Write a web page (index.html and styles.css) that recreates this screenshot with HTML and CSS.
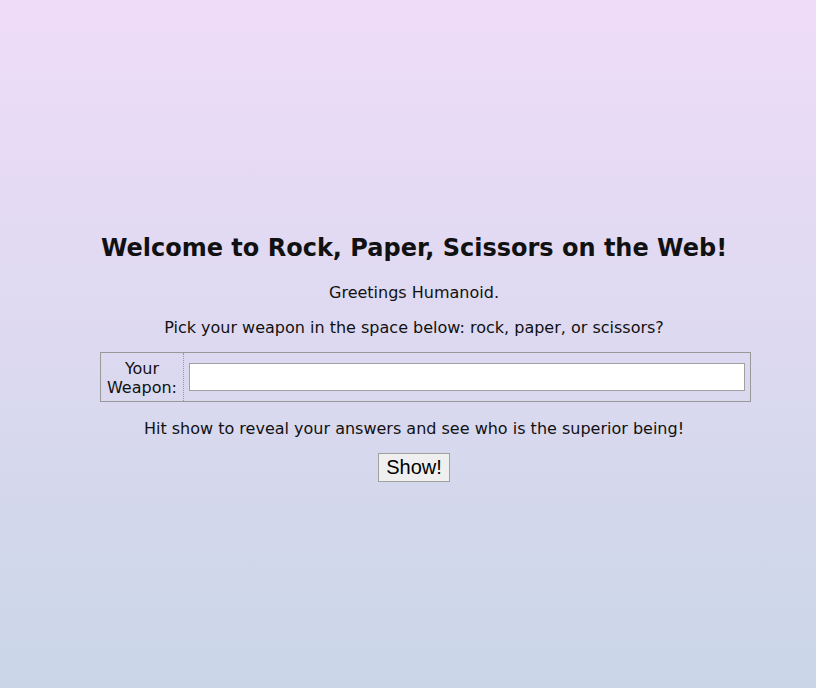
FILE: index.html
```html
<!DOCTYPE html>
<html>
<head>
<meta charset="utf-8">
<link rel="stylesheet" href="styles.css">
</head>
<body>
<div class="page">
  <h1 class="title">Welcome to Rock, Paper, Scissors on the Web!</h1>
  <p class="line">Greetings Humanoid.</p>
  <p class="line prompt">Pick your weapon in the space below: rock, paper, or scissors?</p>
  <table class="weapon-table">
    <tr>
      <td class="label">Your<br>Weapon:</td>
      <td class="field"><input class="weapon-input" type="text"></td>
    </tr>
  </table>
  <p class="line hint">Hit show to reveal your answers and see who is the superior being!</p>
  <div class="actions"><button class="show-btn">Show!</button></div>
</div>
</body>
</html>
```
FILE: styles.css
```css
html, body {
  margin: 0;
  height: 100%;
}
body {
  background: linear-gradient(to bottom, #efdcf9 0%, #cad6e8 100%);
  font-family: "DejaVu Sans", Verdana, sans-serif;
  color: #111;
}
.page {
  width: 628px;
  margin-left: 100px;
  padding-top: 230px;
  text-align: center;
}
.title {
  font-size: 24px;
  font-weight: bold;
  margin: 0 0 17px;
  line-height: 36px;
}
.line {
  font-size: 16px;
  margin: 0 0 16px;
  line-height: 19px;
}
.prompt {
  margin-bottom: 15px;
}
.weapon-table {
  width: 651px;
  border: 1px solid #999;
  border-collapse: separate;
  border-spacing: 0;
  margin: 0 0 17px;
}
.label {
  width: 80px;
  font-size: 16px;
  line-height: 19px;
  padding: 6px 1px 4px;
  border-right: 1px dotted #999;
  text-align: center;
}
.field {
  padding: 0 5px;
}
.weapon-input {
  display: block;
  width: 556px;
  height: 28px;
  box-sizing: border-box;
  border: 1px solid #a0a0a0;
  background: #fff;
  margin: 0;
}
.hint {
  margin-bottom: 15px;
}
.show-btn {
  font-family: "Liberation Sans", Arial, sans-serif;
  font-size: 20px;
  padding: 1px 7px;
  height: 29px;
  border: 1px solid #a0a0a0;
  background: #efefef;
  border-radius: 0;
  color: #000;
}
```
